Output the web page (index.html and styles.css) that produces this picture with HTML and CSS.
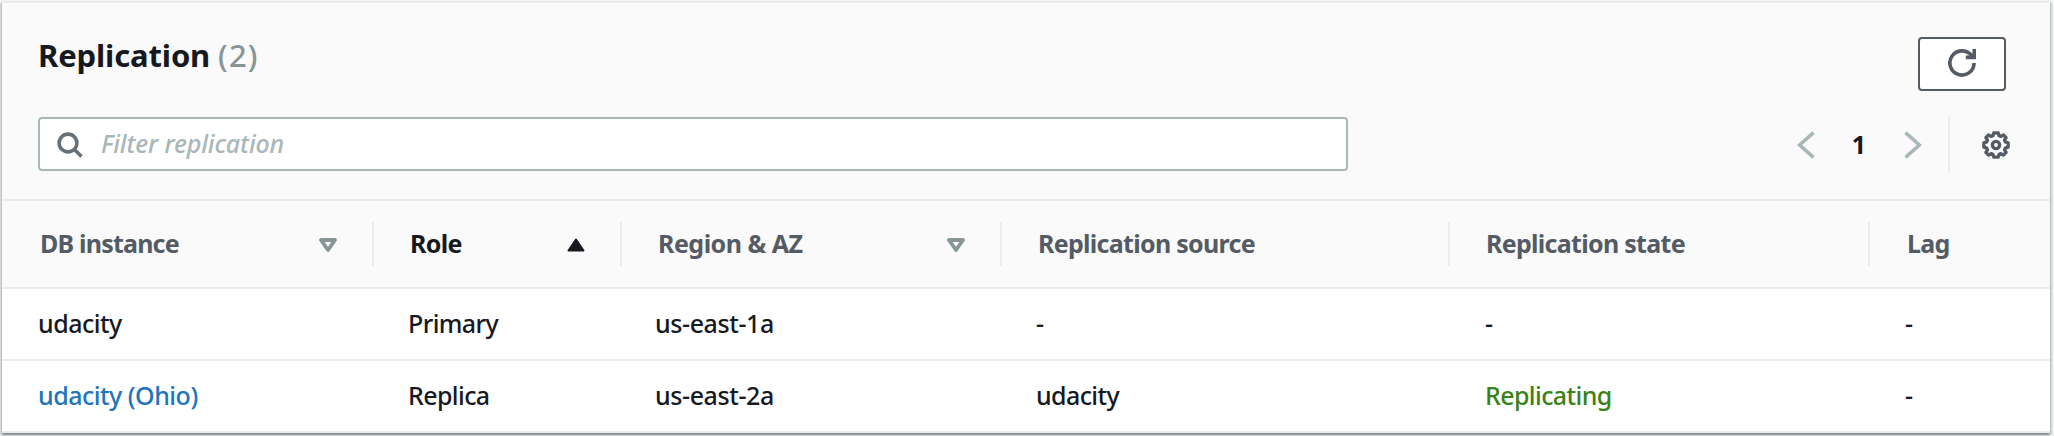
FILE: index.html
```html
<!DOCTYPE html>
<html lang="en">
<head>
<meta charset="utf-8">
<title>Replication</title>
<link rel="stylesheet" href="styles.css">
</head>
<body>
<section class="card">
  <header class="card-header">
    <div class="title-row">
      <h2 class="title"><span class="title-name">Replication</span> <span class="count">(2)</span></h2>
      <button class="refresh" aria-label="Refresh">
        <svg width="32" height="32" viewBox="0 0 32 32" fill="none" stroke="currentColor" stroke-width="3.6">
          <path d="M28.1 16A12.1 12.1 0 1 1 25.2 8.1L27.5 11"/>
          <path d="M28.2 2V10.4H19.8"/>
        </svg>
      </button>
    </div>
    <div class="tools-row">
      <label class="filter">
        <svg class="search-icon" width="26" height="26" viewBox="0 0 26 26" fill="none" stroke="currentColor" stroke-width="3.6">
          <circle cx="11" cy="11" r="8.9"/><path d="M17 17L24.5 24.5"/>
        </svg>
        <span class="placeholder">Filter replication</span>
      </label>
      <nav class="pager">
        <svg class="chevron" width="18" height="28" viewBox="0 0 18 28" fill="none" stroke="currentColor" stroke-width="3.6"><path d="M16.5 1.7L2.6 14L16.5 26.3"/></svg>
        <span class="page">1</span>
        <svg class="chevron" width="18" height="28" viewBox="0 0 18 28" fill="none" stroke="currentColor" stroke-width="3.6"><path d="M1.5 1.7L15.4 14L1.5 26.3"/></svg>
      </nav>
      <div class="settings">
        <svg width="28" height="28" viewBox="0 0 28 28" fill="none" stroke="currentColor" stroke-width="3.4" stroke-linejoin="round">
          <path d="M11.8 1.9H16.2L17.1 4.7L18.9 5.4L21.4 3.9L24.1 6.6L22.6 9.1L23.3 10.9L26.1 11.8V16.2L23.3 17.1L22.6 18.9L24.1 21.4L21.4 24.1L18.9 22.6L17.1 23.3L16.2 26.1H11.8L10.9 23.3L9.1 22.6L6.6 24.1L3.9 21.4L5.4 18.9L4.7 17.1L1.9 16.2V11.8L4.7 10.9L5.4 9.1L3.9 6.6L6.6 3.9L9.1 5.4L10.9 4.7Z"/>
          <circle cx="14" cy="14" r="3.6"/>
        </svg>
      </div>
    </div>
  </header>
  <div class="row head">
    <div class="th"><span>DB instance</span><svg class="sort" width="18" height="14" viewBox="0 0 18 14"><path d="M2 2H16L9 12Z" fill="none" stroke="currentColor" stroke-width="3.8" stroke-linejoin="round"/></svg></div>
    <div class="th sorted"><span>Role</span><svg class="sort" width="18" height="14" viewBox="0 0 18 14"><path d="M9 1.5L16.5 12.5H1.5Z" fill="currentColor" stroke="currentColor" stroke-width="2" stroke-linejoin="round"/></svg></div>
    <div class="th"><span>Region &amp; AZ</span><svg class="sort" width="18" height="14" viewBox="0 0 18 14"><path d="M2 2H16L9 12Z" fill="none" stroke="currentColor" stroke-width="3.8" stroke-linejoin="round"/></svg></div>
    <div class="th"><span>Replication source</span></div>
    <div class="th"><span>Replication state</span></div>
    <div class="th"><span>Lag</span></div>
  </div>
  <div class="row">
    <div class="td">udacity</div><div class="td">Primary</div><div class="td">us-east-1a</div><div class="td">-</div><div class="td">-</div><div class="td">-</div>
  </div>
  <div class="row">
    <div class="td"><a class="link">udacity (Ohio)</a></div><div class="td">Replica</div><div class="td">us-east-2a</div><div class="td">udacity</div><div class="td"><span class="ok">Replicating</span></div><div class="td">-</div>
  </div>
</section>
</body>
</html>
```
FILE: styles.css
```css
* { box-sizing: border-box; }
html { height: 436px; overflow: hidden; }
body {
  margin: 0;
  padding: 1px 4px 3px 2px;
  height: 436px;
  overflow: hidden;
  background: #f2f3f3;
  color: #16191f;
  font-family: "Noto Sans", sans-serif;
  font-size: 25px;
}
.card {
  height: 432px;
  background: #fff;
  border-top: 2px solid #eaeded;
  box-shadow: 0 2px 2px rgba(0, 28, 36, .3), 2px 2px 2px rgba(0, 28, 36, .15), -2px 2px 2px rgba(0, 28, 36, .15);
}
.card-header {
  height: 198px;
  padding: 34px 44px 0 36px;
  background: #fafafa;
  border-bottom: 2px solid #eaeded;
}
.title-row { display: flex; justify-content: space-between; align-items: flex-start; height: 80px; }
.title { margin: 0; font-size: 31px; line-height: 36px; letter-spacing: -.15px; }
.count { font-weight: 500; letter-spacing: 1.2px; color: #879596; }
.refresh {
  display: flex; align-items: center; justify-content: center;
  width: 88px; height: 54px; padding: 0;
  border: 2px solid #545b64; border-radius: 4px;
  background: #fff; color: #545b64;
}
.refresh svg { margin-top: -2px; }
.tools-row { display: flex; }
.filter {
  display: flex; flex: none; align-items: center; gap: 18px;
  width: 1310px; height: 54px; padding-left: 17px;
  border: 2px solid #aab7b8; border-radius: 4px; background: #fff;
}
.search-icon { color: #687078; margin-top: 2px; }
.placeholder { color: #aab7b8; font-style: italic; font-weight: 500; letter-spacing: -.12px; margin-top: -2px; }
.pager { display: flex; flex: none; align-items: center; justify-content: space-between; width: 125px; height: 54px; margin-left: 449px; margin-top: 1px; }
.chevron { color: #aab7b8; }
.page { font-weight: 700; margin-top: -2px; margin-left: -1px; }
.settings {
  display: flex; flex: none; align-items: center;
  height: 56px; margin-left: 26px; margin-right: -6px; padding-left: 32px;
  border-left: 2px solid #eaeded; color: #545b64;
}
.row {
  display: grid;
  grid-template-columns: 372px 248px 380px 448px 420px 180px;
  align-items: center;
  height: 72px;
  border-bottom: 2px solid #eaeded;
}
.head { height: 88px; background: #fafafa; color: #545b64; font-weight: 700; }
.th {
  display: flex; align-items: center; justify-content: space-between;
  height: 44px; padding: 0 35px 0 36px;
  border-right: 2px solid #eaeded;
  letter-spacing: -.7px;
  white-space: nowrap;
}
.th span { margin-top: -2px; }
.th:first-child { padding-left: 38px; letter-spacing: -.8px; }
.th:nth-child(3) { letter-spacing: -.5px; }
.th:last-child { border-right: 0; padding-left: 37px; }
.sorted { color: #16191f; }
.sort { color: #879596; margin-top: 1px; }
.sorted .sort { color: #16191f; }
.td { padding: 0 0 2px 34px; font-weight: 500; letter-spacing: -.6px; white-space: nowrap; }
.td:first-child { padding-left: 36px; letter-spacing: -.5px; }
.td:nth-child(3) { padding-left: 33px; letter-spacing: -.4px; }
.td:nth-child(n+5) { padding-left: 35px; }
.link { color: #2074ba; }
.ok { color: #3a8118; }
```
